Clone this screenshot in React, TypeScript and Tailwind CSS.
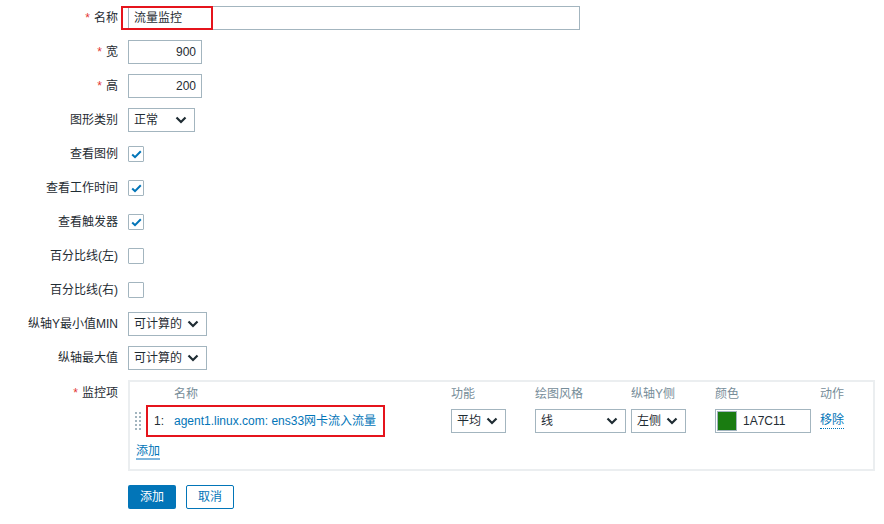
import React from "react";

const font = { fontFamily: '"Liberation Sans", Arial, "Noto Sans CJK SC", sans-serif' };

function Chevron() {
  return (
    <svg width="12" height="8" viewBox="0 0 12 8" className="shrink-0">
      <path d="M1.5 1.5 L6 6 L10.5 1.5" fill="none" stroke="#1f2c33" strokeWidth="2.2" />
    </svg>
  );
}

function Select({ w, text }: { w: string; text: string }) {
  return (
    <div className={`${w} h-[24px] border border-[#a3b5bf] bg-white flex items-center justify-between pl-[5px] pr-[7px] text-[12px] text-[#1f2c33]`}>
      <span>{text}</span>
      <Chevron />
    </div>
  );
}

function Check({ on }: { on: boolean }) {
  return (
    <div className="w-[16px] h-[16px] border border-[#a3b5bf] bg-white flex items-center justify-center rounded-[1px]">
      {on && (
        <svg width="11" height="9" viewBox="0 0 11 9">
          <path d="M1.2 4.5 L4 7.2 L9.8 1.2" fill="none" stroke="#0275b8" strokeWidth="2" />
        </svg>
      )}
    </div>
  );
}

function Label({ text, req }: { text: string; req?: boolean }) {
  return (
    <div className="w-[118px] text-right pr-0 text-[12px] text-[#1f2c33] shrink-0">
      {req && <span className="text-[#e33734] mr-[4px]">*</span>}
      {text}
    </div>
  );
}

function Row({ label, req, children, h = "h-[24px]" }: { label: string; req?: boolean; children: React.ReactNode; h?: string }) {
  return (
    <div className={`flex items-center gap-[10px] ${h}`}>
      <Label text={label} req={req} />
      {children}
    </div>
  );
}

export default function App() {
  return (
    <div className="w-[884px] h-[524px] bg-white overflow-hidden" style={font}>
      <div className="pt-[6px] flex flex-col gap-[10px]">
        <Row label="名称" req>
          <div className="relative w-[452px] h-[24px] border border-[#a3b5bf] flex items-center pl-[5px] text-[12px] text-[#1f2c33]">
            流量监控
            <div className="absolute left-[-8px] top-[-1px] w-[92px] h-[24px] border-2 border-[#e5141c]" />
          </div>
        </Row>
        <Row label="宽" req>
          <div className="w-[74px] h-[24px] border border-[#a3b5bf] flex items-center justify-end pr-[5px] text-[12px] text-[#1f2c33]">900</div>
        </Row>
        <Row label="高" req>
          <div className="w-[74px] h-[24px] border border-[#a3b5bf] flex items-center justify-end pr-[5px] text-[12px] text-[#1f2c33]">200</div>
        </Row>
        <Row label="图形类别">
          <Select w="w-[67px]" text="正常" />
        </Row>
        <Row label="查看图例"><Check on /></Row>
        <Row label="查看工作时间"><Check on /></Row>
        <Row label="查看触发器"><Check on /></Row>
        <Row label="百分比线(左)"><Check on={false} /></Row>
        <Row label="百分比线(右)"><Check on={false} /></Row>
        <Row label="纵轴Y最小值MIN">
          <Select w="w-[79px]" text="可计算的" />
        </Row>
        <Row label="纵轴最大值">
          <Select w="w-[79px]" text="可计算的" />
        </Row>
        <div className="flex items-start gap-[10px]">
          <div className="pt-[4px]"><Label text="监控项" req /></div>
          <div className="w-[747px] h-[91px] border-2 border-[#ebeef0] border-b-2 pl-[4px] pt-[3px] text-[12px]">
            <div className="flex text-[#768d99] h-[18px] items-center">
              <div className="w-[40px]" />
              <div className="w-[277px]">名称</div>
              <div className="w-[84px]">功能</div>
              <div className="w-[96px]">绘图风格</div>
              <div className="w-[84px]">纵轴Y侧</div>
              <div className="w-[105px]">颜色</div>
              <div>动作</div>
            </div>
            <div className="flex items-center h-[34px] mt-[1px]">
              <div className="w-[12px] flex justify-start pl-[1px]">
                <div className="grid grid-cols-2 gap-[2px]">
                  {Array.from({ length: 10 }).map((_, i) => (
                    <div key={i} className="w-[2px] h-[2px] bg-[#a3b5bf]" />
                  ))}
                </div>
              </div>
              <div className="w-[305px] relative flex items-center">
                <div className="h-[32px] w-[239px] border-2 border-[#e5141c] flex items-center pl-[6px]">
                  <span className="text-[#1f2c33] w-[20px]">1:</span>
                  <span className="text-[#0275b8]">agent1.linux.com: ens33网卡流入流量</span>
                </div>
              </div>
              <div className="w-[84px]"><Select w="w-[55px]" text="平均" /></div>
              <div className="w-[96px]"><Select w="w-[91px]" text="线" /></div>
              <div className="w-[84px]"><Select w="w-[55px]" text="左侧" /></div>
              <div className="w-[105px]">
                <div className="w-[96px] h-[24px] border border-[#a3b5bf] flex items-center pl-[1px] gap-[6px] text-[#1f2c33]">
                  <div className="w-[20px] h-[20px] border border-[#a3b5bf] bg-[#1a7c11]" />
                  <span>1A7C11</span>
                </div>
              </div>
              <div className="text-[#0275b8] border-b border-dotted border-[#0275b8] leading-[15px]">移除</div>
            </div>
            <div className="mt-[4px] ml-[2px]">
              <span className="text-[#0275b8] border-b-2 border-[#7fb6dd] leading-[14px] inline-block">添加</span>
            </div>
          </div>
        </div>
        <div className="flex gap-[10px] pl-[128px] mt-[4px]">
          <div className="w-[48px] h-[24px] bg-[#0275b8] rounded-[2px] text-white text-[12px] flex items-center justify-center">添加</div>
          <div className="w-[48px] h-[24px] border border-[#0275b8] rounded-[2px] text-[#0275b8] text-[12px] flex items-center justify-center">取消</div>
        </div>
      </div>
    </div>
  );
}
